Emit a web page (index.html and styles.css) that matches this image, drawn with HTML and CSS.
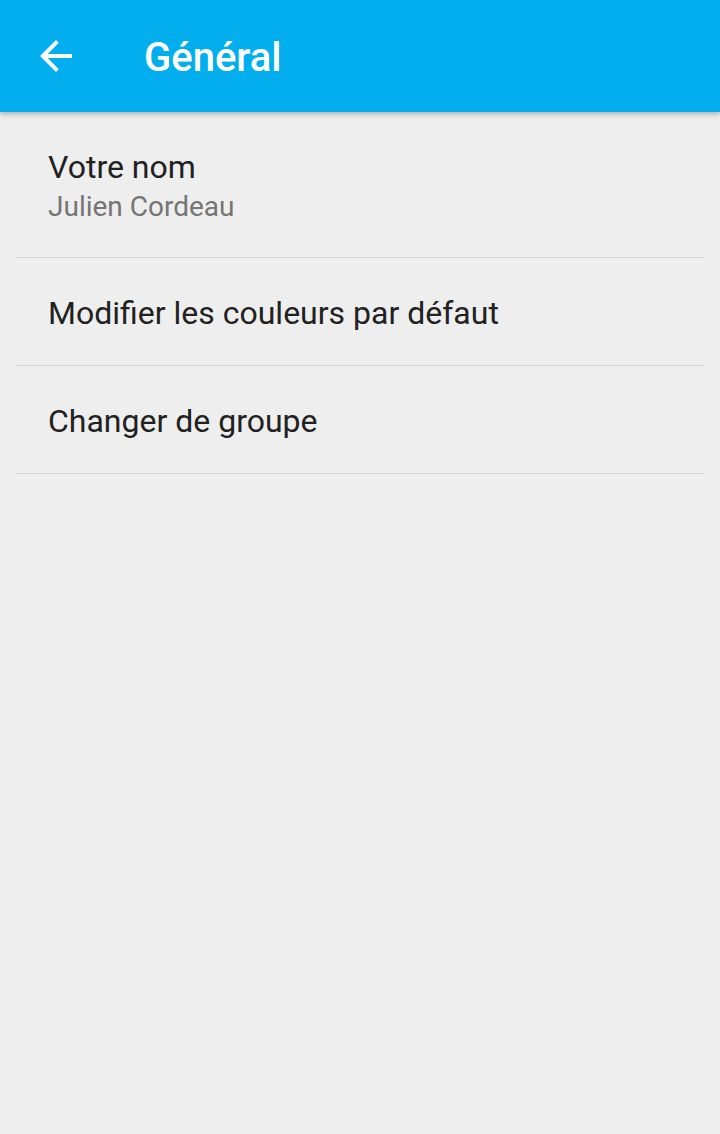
FILE: index.html
```html
<!DOCTYPE html>
<html lang="fr">
<head>
<meta charset="utf-8">
<title>Général</title>
<link rel="stylesheet" href="styles.css">
</head>
<body>
<header class="toolbar">
  <button class="back" aria-label="Retour">
    <svg viewBox="0 0 24 24" width="48" height="48"><path fill="#fff" d="M20 11H7.83l5.59-5.59L12 4l-8 8 8 8 1.41-1.41L7.83 13H20v-2z"/></svg>
  </button>
  <h1 class="title">Général</h1>
</header>
<main class="list">
  <div class="item first">
    <div class="item-title">Votre nom</div>
    <div class="item-sub">Julien Cordeau</div>
  </div>
  <div class="item">
    <div class="item-title">Modifier les couleurs par défaut</div>
  </div>
  <div class="item">
    <div class="item-title">Changer de groupe</div>
  </div>
</main>
</body>
</html>
```
FILE: styles.css
```css
html, body {
  margin: 0;
  padding: 0;
  background: #eeeeee;
  font-family: Roboto, "Noto Sans", "Liberation Sans", sans-serif;
}
.toolbar {
  height: 112px;
  box-sizing: border-box;
  background: #03aeee;
  display: flex;
  align-items: flex-start;
  padding: 32px 0 0 32px;
  box-shadow: 0 2px 5px rgba(0, 0, 0, 0.28);
  position: relative;
  z-index: 1;
}
.back {
  width: 48px;
  height: 48px;
  padding: 0;
  border: 0;
  background: none;
  display: block;
}
.back svg { display: block; }
.title {
  margin: 0 0 0 64px;
  font-size: 40px;
  font-weight: 500;
  line-height: 52px;
  color: #ffffff;
}
.list {
  margin: 0 16px;
}
.item {
  padding: 35px 0 32px 32px;
  border-bottom: 1px solid #d6d6d6;
}
.item.first {
  padding-bottom: 30px;
}
.item-title {
  font-size: 32px;
  line-height: 40px;
  color: #212121;
}
.item-sub {
  font-size: 28px;
  line-height: 40px;
  color: #757575;
}
```
